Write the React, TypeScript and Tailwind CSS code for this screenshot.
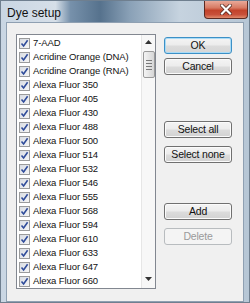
import React from "react";

const items = [
  "7-AAD",
  "Acridine Orange (DNA)",
  "Acridine Orange (RNA)",
  "Alexa Fluor 350",
  "Alexa Fluor 405",
  "Alexa Fluor 430",
  "Alexa Fluor 488",
  "Alexa Fluor 500",
  "Alexa Fluor 514",
  "Alexa Fluor 532",
  "Alexa Fluor 546",
  "Alexa Fluor 555",
  "Alexa Fluor 568",
  "Alexa Fluor 594",
  "Alexa Fluor 610",
  "Alexa Fluor 633",
  "Alexa Fluor 647",
  "Alexa Fluor 660",
];

function Check() {
  return (
    <div className="w-[11px] h-[11px] shrink-0 border border-[#9a9b9c] bg-[linear-gradient(135deg,#d8dce3,#f6f6f6)] flex items-center justify-center">
      <svg width="9" height="9" viewBox="0 0 9 9">
        <path d="M1.5 4.5 L3.6 7 L7.6 1.3" stroke="#2f4c9a" strokeWidth="1.6" fill="none" />
      </svg>
    </div>
  );
}

function Btn({
  label,
  cls,
  def,
  disabled,
}: {
  label: string;
  cls: string;
  def?: boolean;
  disabled?: boolean;
}) {
  const border = disabled
    ? "border-[#b8bcbf] bg-[#f4f4f4] text-[#9a9a9a]"
    : def
    ? "border-[#3c90c6] bg-[linear-gradient(#f4f4f4_0%,#ececec_48%,#dcdcdc_52%,#d6d6d6_100%)] text-[#111] shadow-[inset_0_0_0_1px_#a9dbf6]"
    : "border-[#707070] bg-[linear-gradient(#f4f4f4_0%,#ececec_48%,#dcdcdc_52%,#d2d2d2_100%)] text-[#111] shadow-[inset_0_0_0_1px_#fbfbfb]";
  return (
    <div
      className={`${cls} h-[17px] w-[68px] rounded-[3px] border ${border} flex items-center justify-center text-[10.5px] tracking-[-0.2px] leading-none`}
    >
      {label}
    </div>
  );
}

export default function App() {
  return (
    <div
      className="w-[250px] h-[303px] overflow-hidden flex flex-col bg-[linear-gradient(90deg,#c9d6e3_0%,#d6dfe8_22%,#7791ab_28%,#56728d_40%,#8aa1b7_52%,#c6d3df_72%,#b6c6d5_100%)] border border-[#6f7f8f]"
      style={{ fontFamily: '"Liberation Sans", Arial, sans-serif' }}
    >
      <div className="h-[21px] shrink-0 flex items-start justify-between">
        <div className="pl-[6px] pt-[6px] text-[12px] leading-none text-[#111]">Dye setup</div>
        <div className="mr-[1px] w-[44px] h-[18px] rounded-b-[4px] border border-t-0 border-[#5b2a22] bg-[linear-gradient(#e9a999_0%,#d77a63_40%,#c2432b_55%,#c8503a_80%,#e08a6c_100%)] flex items-center justify-center">
          <svg width="12" height="11" viewBox="0 0 12 11">
            <path d="M2 1.5 L10 9.5 M10 1.5 L2 9.5" stroke="#4a2018" strokeWidth="3.6" strokeLinecap="square" />
            <path d="M2 1.5 L10 9.5 M10 1.5 L2 9.5" stroke="#ffffff" strokeWidth="2.2" strokeLinecap="square" />
          </svg>
        </div>
      </div>
      <div className="flex-1 mx-[5px] mb-[3px] border border-[#8fa0b2] bg-[#f0f0f0] flex pl-[9px] pt-[11px] pb-[12px] pr-[10px] gap-[8px] text-[#111]">
        <div className="w-[140px] border border-[#828790] bg-white flex overflow-hidden">
          <div className="flex-1 pt-[1px] overflow-hidden">
            {items.map((t) => (
              <div key={t} className="h-[14px] flex items-center pl-[2px] gap-[3px]">
                <Check />
                <span className="text-[9.5px] tracking-[-0.1px] leading-none whitespace-nowrap">{t}</span>
              </div>
            ))}
          </div>
          <div className="w-[14px] shrink-0 border-l border-[#e6e6e6] bg-[#f7f7f7] flex flex-col items-center">
            <div className="h-[14px] flex items-center justify-center">
              <svg width="7" height="4" viewBox="0 0 7 4">
                <path d="M0 4 L3.5 0 L7 4 Z" fill="#333" />
              </svg>
            </div>
            <div className="mt-[2px] w-[12px] h-[27px] rounded-[2px] border border-[#9a9a9a] bg-[linear-gradient(90deg,#f4f4f4,#e2e2e2_60%,#d6d6d6)] flex flex-col items-center justify-center gap-[2px]">
              <div className="w-[6px] h-px bg-[#7a7a7a]" />
              <div className="w-[6px] h-px bg-[#7a7a7a]" />
              <div className="w-[6px] h-px bg-[#7a7a7a]" />
              <div className="w-[6px] h-px bg-[#7a7a7a]" />
            </div>
            <div className="flex-1" />
            <div className="h-[14px] flex items-center justify-center mb-[2px]">
              <svg width="7" height="4" viewBox="0 0 7 4">
                <path d="M0 0 L7 0 L3.5 4 Z" fill="#333" />
              </svg>
            </div>
          </div>
        </div>
        <div className="flex flex-col">
          <Btn label="OK" cls="mt-[3px]" def />
          <Btn label="Cancel" cls="mt-[4px]" />
          <Btn label="Select all" cls="mt-[46px]" />
          <Btn label="Select none" cls="mt-[8px]" />
          <Btn label="Add" cls="mt-[40px]" />
          <Btn label="Delete" cls="mt-[8px]" disabled />
        </div>
      </div>
    </div>
  );
}
